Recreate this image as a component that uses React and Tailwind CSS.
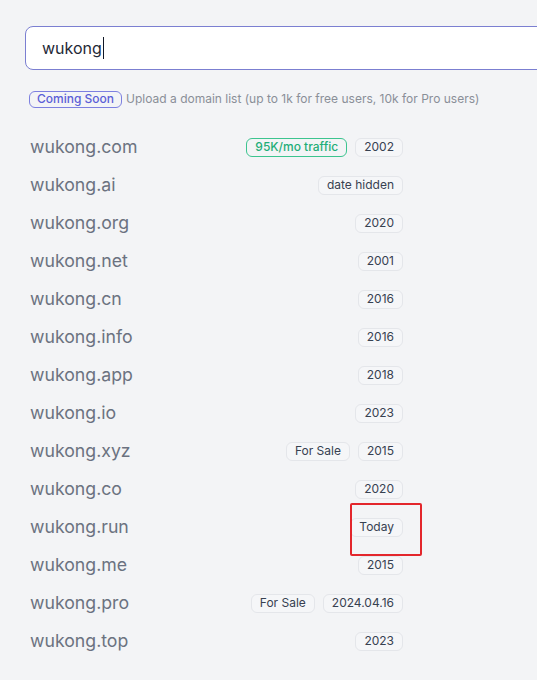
import React from "react";

const domains = [
  { name: "wukong.com", tags: [{ label: "95K/mo traffic", green: true }, { label: "2002" }] },
  { name: "wukong.ai", tags: [{ label: "date hidden" }] },
  { name: "wukong.org", tags: [{ label: "2020" }] },
  { name: "wukong.net", tags: [{ label: "2001" }] },
  { name: "wukong.cn", tags: [{ label: "2016" }] },
  { name: "wukong.info", tags: [{ label: "2016" }] },
  { name: "wukong.app", tags: [{ label: "2018" }] },
  { name: "wukong.io", tags: [{ label: "2023" }] },
  { name: "wukong.xyz", tags: [{ label: "For Sale" }, { label: "2015" }] },
  { name: "wukong.co", tags: [{ label: "2020" }] },
  { name: "wukong.run", tags: [{ label: "Today" }], marked: true },
  { name: "wukong.me", tags: [{ label: "2015" }] },
  { name: "wukong.pro", tags: [{ label: "For Sale" }, { label: "2024.04.16" }] },
  { name: "wukong.top", tags: [{ label: "2023" }] },
];

const Tag = ({ label, green }) => (
  <span
    className={
      green
        ? "h-[19px] px-[8px] flex items-center rounded-md border border-[#3cc48f] text-[#1fae78] text-[12px] font-medium"
        : "h-[19px] px-[8px] flex items-center rounded-md border border-[#e4e6ea] bg-[#f5f6f8] text-[#374151] text-[12px]"
    }
  >
    {label}
  </span>
);

export default function App() {
  return (
    <div className="w-full min-h-[680px] overflow-hidden bg-[#f3f4f6] font-['Inter',sans-serif]">
      <div className="pl-[25px] pt-[26px]">
        <div className="w-[540px] h-[44px] rounded-lg border border-[#7b7fd1] bg-white flex items-center pl-[16px]">
          <span className="text-[16px] text-[#1f2937]">wukong</span>
          <span className="w-px h-[22px] bg-[#111827] ml-px" />
        </div>

        <div className="mt-[20px] ml-[4px] flex items-center gap-[4px]">
          <span className="h-[17px] px-[7px] flex items-center rounded-md border border-[#7d80e0] text-[#5b5fd6] text-[12px] font-medium">
            Coming Soon
          </span>
          <span className="text-[12px] text-[#8a8f98]">
            Upload a domain list (up to 1k for free users, 10k for Pro users)
          </span>
        </div>

        <div className="mt-[20px] ml-[5px] w-[373px]">
          {domains.map((d) => (
            <div key={d.name} className="h-[38px] flex items-center justify-between">
              <span className="text-[17.7px] text-[#6b7280]">{d.name}</span>
              <div className="relative flex items-center gap-[8px]">
                {d.tags.map((t) => (
                  <Tag key={t.label} {...t} />
                ))}
                {d.marked && (
                  <div className="absolute right-[-19px] top-[-15px] w-[72px] h-[53px] border-2 border-[#e3262c] rounded-[2px]" />
                )}
              </div>
            </div>
          ))}
        </div>
      </div>
    </div>
  );
}
